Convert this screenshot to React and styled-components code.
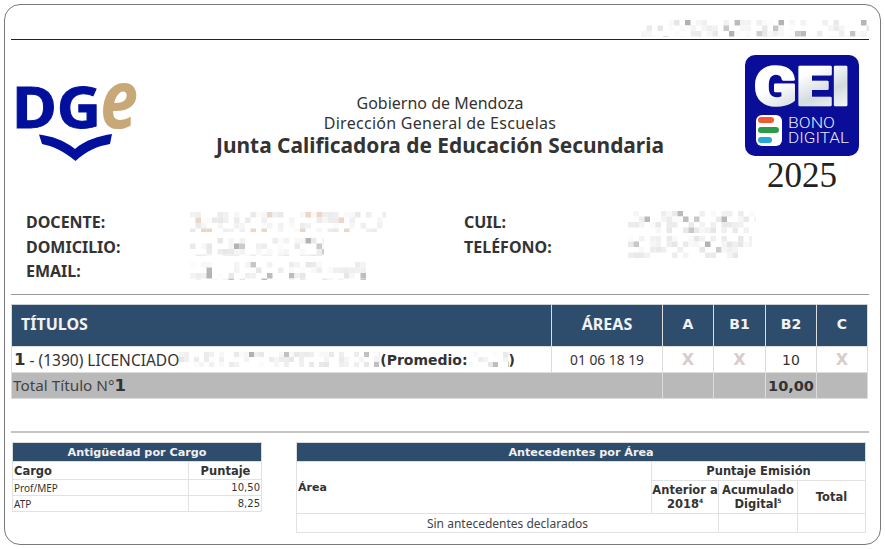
import React from 'react'
import styled, { createGlobalStyle } from 'styled-components'

const BODY = '"Noto Sans", "Open Sans", sans-serif'
const TABLE = '"DejaVu Sans", sans-serif'

// the reference hides personal data behind a mosaic, this draws a similar one
const Mosaic = ({ width, height, seed, cell = 5.5, tint }) => {
  const cells = []
  let s = seed
  for (let y = 0; y < height; y += cell) {
    for (let x = 0; x < width; x += cell) {
      s = (s * 9301 + 49297) % 233280
      const r = s / 233280
      if (r < 0.5) continue
      const dark = r > 0.94
      const g = Math.round(dark ? 175 + (1 - r) * 500 : 252 - (r - 0.5) * 50)
      const warm = tint && r > 0.9
      cells.push(
        <rect
          key={`${x}-${y}`}
          x={x}
          y={y}
          width={cell}
          height={cell}
          fill={warm ? '#ecd6c8' : `rgb(${g},${g},${g})`}
        />
      )
    }
  }
  return (
    <svg width={width} height={height} viewBox={`0 0 ${width} ${height}`}>
      {cells}
    </svg>
  )
}

const DgeLogo = () => (
  <svg width="136" height="124" viewBox="0 0 136 124">
    <text x="0" y="87" fontFamily='"Noto Sans", sans-serif' fontWeight="700" fontSize="58" fill="#000f9c" stroke="#000f9c" strokeWidth="1" textLength="89" lengthAdjust="spacingAndGlyphs">DG</text>
    <text x="88" y="87" fontFamily='"Noto Sans", sans-serif' fontStyle="italic" fontWeight="700" fontSize="80" fill="#c7a876" textLength="38" lengthAdjust="spacingAndGlyphs">e</text>
    <path d="M27 93.500 C39 95 52 99 63 108 C73 99 87 95 100 93 L98 103 C86 105 74 110 63.500 120 C52 110 40 105 30 103 Z" fill="#000f9c" />
  </svg>
)

const GeiLogo = () => (
  <svg width="114" height="101" viewBox="0 0 114 101">
    <defs>
      <linearGradient id="gei" x1="0" y1="0" x2="0.7" y2="1">
        <stop offset="0.45" stopColor="#ffffff" />
        <stop offset="0.75" stopColor="#d3dbe0" />
        <stop offset="1" stopColor="#f3f5f6" />
      </linearGradient>
    </defs>
    <rect width="114" height="101" rx="10" fill="#0a0d98" />
    <text x="9" y="50" fontFamily="Roboto, sans-serif" fontWeight="900" fontSize="54" fill="url(#gei)" stroke="url(#gei)" strokeWidth="2.500" strokeLinejoin="round" textLength="96" lengthAdjust="spacingAndGlyphs">GEI</text>
    <rect x="11" y="60" width="26" height="31" rx="6" fill="#fff" />
    <rect x="13" y="62" width="16" height="6" rx="3" fill="#ef5a32" />
    <rect x="13" y="72" width="21" height="6" rx="3" fill="#2b9a4b" />
    <rect x="13" y="82" width="14" height="6" rx="3" fill="#27a7d6" />
    <text x="43" y="73" fontFamily="Roboto, sans-serif" fontWeight="300" fontSize="15" fill="#e6e8f4" textLength="47" lengthAdjust="spacingAndGlyphs">BONO</text>
    <text x="43" y="88" fontFamily="Roboto, sans-serif" fontWeight="300" fontSize="15" fill="#e6e8f4" textLength="61" lengthAdjust="spacingAndGlyphs">DIGITAL</text>
  </svg>
)

const App = () => (
  <Page>
    <GlobalStyle />
    <Card>
      <TopBar>
        <Mosaic width={228} height={17} seed={71} cell={5.5} />
      </TopBar>
      <Header>
        <DgeSlot>
          <DgeLogo />
        </DgeSlot>
        <Heading>
          <HeadLine>Gobierno de Mendoza</HeadLine>
          <HeadLine $wide>Dirección General de Escuelas</HeadLine>
          <HeadTitle>Junta Calificadora de Educación Secundaria</HeadTitle>
        </Heading>
        <GeiSlot>
          <GeiLogo />
          <Year>2025</Year>
        </GeiSlot>
      </Header>
      <Info>
        <InfoLabel>DOCENTE:</InfoLabel>
        <InfoValue><Mosaic width={196} height={20} seed={12} tint /></InfoValue>
        <InfoLabel>CUIL:</InfoLabel>
        <InfoValue><Mosaic width={128} height={22} seed={31} /></InfoValue>
        <InfoLabel>DOMICILIO:</InfoLabel>
        <InfoValue><Mosaic width={134} height={18} seed={45} /></InfoValue>
        <InfoLabel>TELÉFONO:</InfoLabel>
        <InfoValue><Mosaic width={124} height={22} seed={58} /></InfoValue>
        <InfoLabel>EMAIL:</InfoLabel>
        <InfoValue><Mosaic width={178} height={18} seed={83} /></InfoValue>
      </Info>
      <Rule />
      <TitlesTable>
        <colgroup>
          <col />
          <col width="111" />
          <col width="51" />
          <col width="52" />
          <col width="51" />
          <col width="51" />
        </colgroup>
        <thead>
          <tr>
            <TitlesHead $left>TÍTULOS</TitlesHead>
            <TitlesHead>ÁREAS</TitlesHead>
            <TitlesHead $mono>A</TitlesHead>
            <TitlesHead $mono>B1</TitlesHead>
            <TitlesHead $mono>B2</TitlesHead>
            <TitlesHead $mono>C</TitlesHead>
          </tr>
        </thead>
        <tbody>
          <tr>
            <TitleCell>
              <TitleLine>
                <Num>1</Num>&nbsp;- (1390) LICENCIADO
                <Mosaic width={201} height={15} seed={12} cell={5} />
                <strong>(Promedio:</strong>
                <Mosaic width={41} height={15} seed={7} cell={5} />
                <strong>)</strong>
              </TitleLine>
            </TitleCell>
            <AreasCell>01 06 18 19</AreasCell>
            <MarkCell>X</MarkCell>
            <MarkCell>X</MarkCell>
            <ScoreCell>10</ScoreCell>
            <MarkCell>X</MarkCell>
          </tr>
          <tr>
            <TotalCell colSpan={2}>Total Título N°<Num>1</Num></TotalCell>
            <TotalCell />
            <TotalCell />
            <TotalValue>10,00</TotalValue>
            <TotalCell />
          </tr>
        </tbody>
      </TitlesTable>
      <Rule $low />
      <Bottom>
        <SeniorityTable>
          <colgroup>
            <col />
            <col width="73" />
          </colgroup>
          <thead>
            <tr><Caption colSpan={2}>Antigüedad por Cargo</Caption></tr>
            <tr>
              <SmallHead $left>Cargo</SmallHead>
              <SmallHead>Puntaje</SmallHead>
            </tr>
          </thead>
          <tbody>
            <tr><SmallCell>Prof/MEP</SmallCell><SmallCell $right>10,50</SmallCell></tr>
            <tr><SmallCell>ATP</SmallCell><SmallCell $right>8,25</SmallCell></tr>
          </tbody>
        </SeniorityTable>
        <RecordsTable>
          <colgroup>
            <col />
            <col width="67" />
            <col width="79" />
            <col width="68" />
          </colgroup>
          <thead>
            <tr><Caption colSpan={4}>Antecedentes por Área</Caption></tr>
            <tr>
              <AreaHead rowSpan={2}>Área</AreaHead>
              <RecordHead colSpan={3}>Puntaje Emisión</RecordHead>
            </tr>
            <tr>
              <RecordHead $tall>Anterior a 2018<sup>4</sup></RecordHead>
              <RecordHead $tall>Acumulado Digital<sup>5</sup></RecordHead>
              <RecordHead $tall>Total</RecordHead>
            </tr>
          </thead>
          <tbody>
            <tr>
              <EmptyCell colSpan={2}>Sin antecedentes declarados</EmptyCell>
              <EmptyCell />
              <EmptyCell />
            </tr>
          </tbody>
        </RecordsTable>
      </Bottom>
    </Card>
  </Page>
)

export default App

const GlobalStyle = createGlobalStyle`
  html, body {
    margin: 0;
    background: #fff;
  }
  svg {
    display: block;
  }
`
const Page = styled.div`
  width: 885px;
  height: 549px;
  padding: 4px;
  box-sizing: border-box;
  overflow: hidden;
  color: #333;
  font-family: ${BODY};
`
const Card = styled.div`
  width: 877px;
  height: 541px;
  box-sizing: border-box;
  border: 1px solid #7a7a7a;
  border-radius: 16px;
  padding: 0 11px 0 6px;
  overflow: hidden;
`
const TopBar = styled.div`
  height: 35px;
  box-sizing: border-box;
  padding-top: 15px;
  border-bottom: 1px solid #222;
  display: flex;
  justify-content: flex-end;
`
const Header = styled.div`
  display: flex;
  height: 152px;
  color: #333;
`
const DgeSlot = styled.div`
  padding: 1px 0 0 1px;
  width: 128px;
`
const Heading = styled.div`
  flex: 1;
  padding: 53px 5px 0 0;
  text-align: center;
  white-space: nowrap;
`
const HeadLine = styled.div`
  font-size: 16px;
  line-height: 20px;
  letter-spacing: ${p => (p.$wide ? '0.28px' : '0')};
`
const HeadTitle = styled.div`
  font-size: 20.900px;
  line-height: 24px;
  font-weight: 700;
`
const GeiSlot = styled.div`
  width: 124px;
  padding-top: 15px;
  box-sizing: border-box;
  padding-right: 10px;
`
const Year = styled.div`
  font-family: 'Liberation Serif', serif;
  font-size: 35px;
  line-height: 36px;
  margin-top: 2px;
  text-align: center;
  color: #222;
`
const Info = styled.div`
  display: grid;
  grid-template-columns: 164px 274px 164px 1fr;
  grid-auto-rows: 24.500px;
  padding: 18px 0 0 15px;
  height: 102px;
  box-sizing: border-box;
  align-items: center;
`
const InfoLabel = styled.div`
  font-size: 16px;
  font-weight: 700;
  line-height: 20px;
`
const InfoValue = styled.div`
  display: flex;
  align-items: center;
`
const Rule = styled.div`
  height: ${p => (p.$low ? '2px' : '1px')};
  background: ${p => (p.$low ? '#c4c4c4' : '#9a9a9a')};
  margin: ${p => (p.$low ? '32px 0 9px' : '0 0 9px')};
`
const TitlesTable = styled.table`
  width: 857px;
  table-layout: fixed;
  border-collapse: collapse;
`
const TitlesHead = styled.th`
  height: 38px;
  padding: 0 ${p => (p.$left ? '9px' : '0')} 3px;
  background: #2e4d6d;
  border: 1px solid #dcdcdc;
  border-top-color: #c8d0d8;
  color: #f2f2f2;
  font-family: ${p => (p.$mono ? TABLE : BODY)};
  font-size: ${p => (p.$mono ? '14px' : '16px')};
  font-weight: 700;
  text-align: ${p => (p.$left ? 'left' : 'center')};
`
const BodyCell = styled.td`
  height: 25px;
  padding: 0;
  border: 1px solid #dcdcdc;
  background: #fff;
  text-align: center;
`
const TitleCell = styled(BodyCell)`
  padding-left: 2px;
  font-size: 15.500px;
  white-space: nowrap;
  text-align: left;
`
const TitleLine = styled.div`
  display: flex;
  align-items: center;
  strong {
    font-family: ${TABLE};
    font-size: 14px;
  }
`
const Num = styled.span`
  font-family: ${TABLE};
  font-weight: 700;
  font-size: 16.500px;
  line-height: 20px;
`
const AreasCell = styled(BodyCell)`
  font-size: 13.800px;
`
const MarkCell = styled(BodyCell)`
  color: #d8cccc;
  font-family: ${TABLE};
  font-size: 16px;
  font-weight: 700;
`
const ScoreCell = styled(BodyCell)`
  font-family: ${TABLE};
  font-size: 14px;
`
const TotalCell = styled.td`
  height: 25px;
  padding: 0 0 0 1px;
  background: #b9b9b9;
  border: 1px solid #dcdcdc;
  font-size: 15.300px;
  color: #444;
  white-space: nowrap;
  ${Num} {
    color: #333;
  }
`
const TotalValue = styled(TotalCell)`
  font-family: ${TABLE};
  font-weight: 700;
  font-size: 14.500px;
  color: #333;
  text-align: center;
  padding: 0;
`
const Bottom = styled.div`
  display: flex;
  align-items: flex-start;
  gap: 34px;
  margin-left: 1px;
`
const SmallTable = styled.table`
  table-layout: fixed;
  border-collapse: collapse;
  font-family: ${TABLE};
  color: #333;
`
const SeniorityTable = styled(SmallTable)`
  width: 250px;
`
const RecordsTable = styled(SmallTable)`
  width: 570px;
`
const Caption = styled.th`
  height: 18px;
  padding: 0;
  background: #2e4d6d;
  border: 1px solid #dcdcdc;
  color: #f0f0f0;
  font-size: 11.200px;
  font-weight: 700;
`
const SmallHead = styled.th`
  height: 17px;
  padding: 0 0 0 1px;
  border: 1px solid #e2e2e2;
  font-size: 11.500px;
  font-weight: 700;
  text-align: ${p => (p.$left ? 'left' : 'center')};
`
const SmallCell = styled.td`
  height: 15px;
  padding: 0 1px;
  border: 1px solid #e2e2e2;
  font-family: ${p => (p.$right ? TABLE : BODY)};
  font-size: 10px;
  line-height: 12px;
  text-align: ${p => (p.$right ? 'right' : 'left')};
`
const AreaHead = styled.th`
  padding: 0 0 0 1px;
  border: 1px solid #e2e2e2;
  font-size: 11px;
  text-align: left;
`
const RecordHead = styled.th`
  height: ${p => (p.$tall ? '32px' : '18px')};
  padding: 0;
  border: 1px solid #e2e2e2;
  font-size: 11.500px;
  line-height: 14px;
  font-weight: 700;
  sup {
    font-size: 6px;
    line-height: 0;
  }
`
const EmptyCell = styled.td`
  height: 18px;
  padding: 0;
  border: 1px solid #e2e2e2;
  font-family: ${BODY};
  font-size: 12px;
  color: #444;
  text-align: center;
`
